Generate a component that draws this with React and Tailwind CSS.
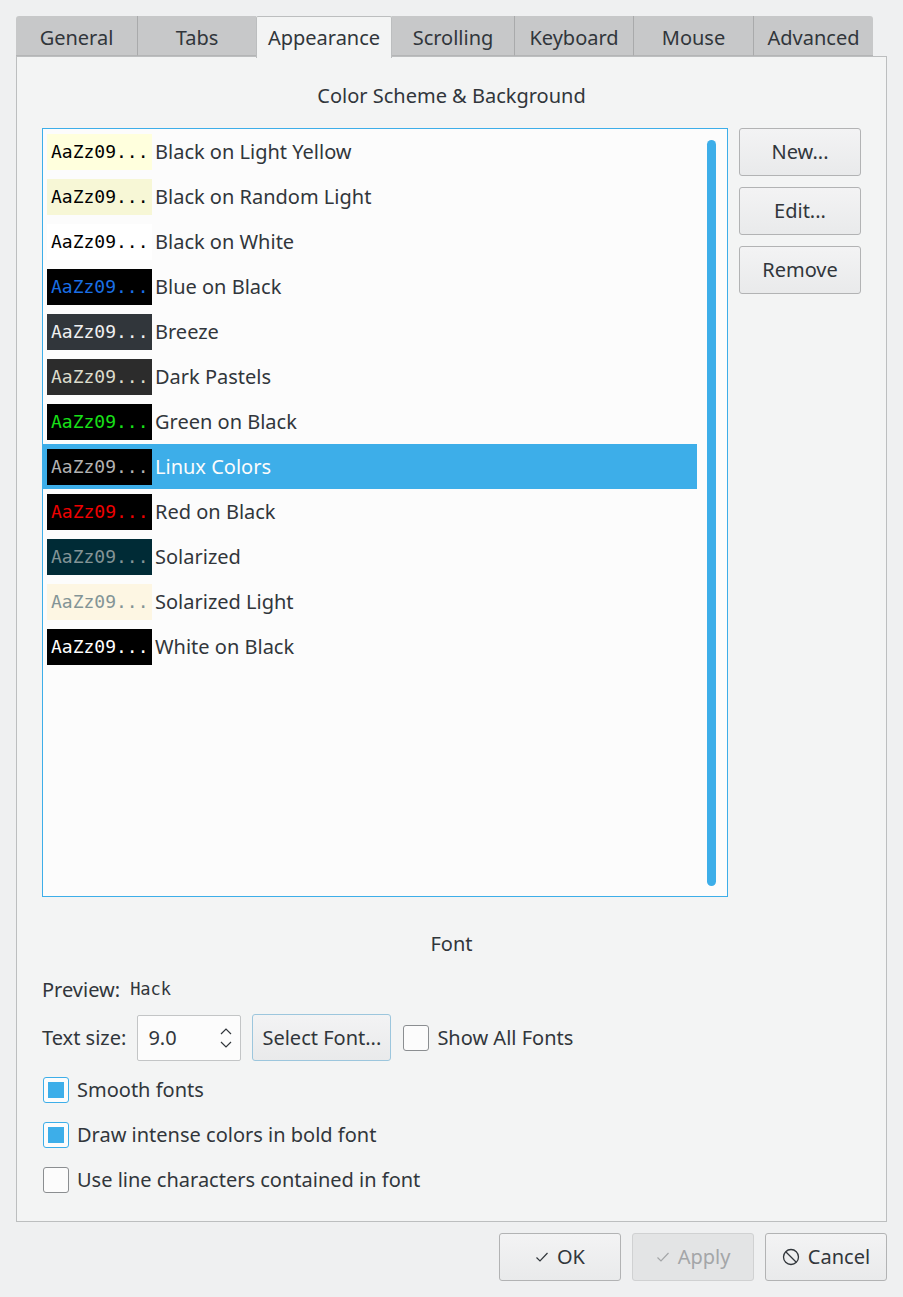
import React from 'react';

const tabs = [
  { name: 'General', w: 'w-[121px]' },
  { name: 'Tabs', w: 'w-[119px]' },
  { name: 'Appearance', w: 'w-[136px]', active: true },
  { name: 'Scrolling', w: 'w-[122px]' },
  { name: 'Keyboard', w: 'w-[119px]' },
  { name: 'Mouse', w: 'w-[120px]' },
  { name: 'Advanced', w: 'w-[120px]' },
];

const schemes = [
  { name: 'Black on Light Yellow', bg: 'bg-[#ffffdd]', fg: 'text-black' },
  { name: 'Black on Random Light', bg: 'bg-[#f7f7d6]', fg: 'text-black' },
  { name: 'Black on White', bg: 'bg-white', fg: 'text-black' },
  { name: 'Blue on Black', bg: 'bg-black', fg: 'text-[#1a6fe6]' },
  { name: 'Breeze', bg: 'bg-[#31363b]', fg: 'text-[#eff0f1]' },
  { name: 'Dark Pastels', bg: 'bg-[#2c2c2c]', fg: 'text-[#dcdccc]' },
  { name: 'Green on Black', bg: 'bg-black', fg: 'text-[#18e018]' },
  { name: 'Linux Colors', bg: 'bg-black', fg: 'text-[#b2b2b2]', selected: true },
  { name: 'Red on Black', bg: 'bg-black', fg: 'text-[#ee0000]' },
  { name: 'Solarized', bg: 'bg-[#002b36]', fg: 'text-[#839496]' },
  { name: 'Solarized Light', bg: 'bg-[#fdf6e3]', fg: 'text-[#839496]' },
  { name: 'White on Black', bg: 'bg-black', fg: 'text-white' },
];

const mono = { fontFamily: '"DejaVu Sans Mono", "Liberation Mono", monospace' };

const Button = ({ children, className = '', disabled }) => (
  <div
    className={`flex items-center justify-center gap-2 rounded-[3px] border ${
      disabled
        ? 'border-[#d0d1d2] bg-[#e3e4e5] text-[#a4a6a8]'
        : 'border-[#b2b3b4] bg-gradient-to-b from-[#f3f3f4] to-[#e9eaeb] text-[#31363b]'
    } ${className}`}
  >
    {children}
  </div>
);

const Checkbox = ({ checked, label }) => (
  <div className="flex items-center h-[45px]">
    <div
      className={`w-[26px] h-[26px] rounded-[3px] border flex items-center justify-center bg-[#fcfcfc] ${
        checked ? 'border-[#3daee9]' : 'border-[#8b8e91]'
      }`}
    >
      {checked && <div className="w-[16px] h-[16px] bg-[#3daee9]"></div>}
    </div>
    <span className="ml-[8px]">{label}</span>
  </div>
);

const CheckIcon = ({ color }) => (
  <svg width="14" height="12" viewBox="0 0 14 12">
    <path d="M1.5 6.5 L5 10 L12.5 2" fill="none" stroke={color} strokeWidth="1.2" />
  </svg>
);

export default function App() {
  return (
    <div
      className="w-[903px] h-[1297px] bg-[#eff0f1] text-[#31363b] text-[20px] px-[16px] pt-[16px]"
      style={{ fontFamily: '"Noto Sans", "Open Sans", sans-serif' }}
    >
      {/* Tab bar */}
      <div className="flex h-[40px] relative z-10">
        {tabs.map((t, i) => (
          <div
            key={t.name}
            className={`${t.w} flex items-center justify-center ${
              t.active
                ? 'bg-[#f3f4f4] border-x border-t border-[#bcbebf] h-[42px] rounded-t-[2px]'
                : `bg-[#c7c8c9] h-[40px] pt-[4px] border-b border-[#b4b5b6] ${i === 0 ? 'rounded-tl-[3px]' : ''} ${i === tabs.length - 1 ? 'rounded-tr-[3px]' : ''} ${i > 0 && !tabs[i - 1].active ? 'border-l border-l-[#a9aaab]' : ''}`
            }`}
          >
            {t.name}
          </div>
        ))}
      </div>

      {/* Page */}
      <div className="h-[1166px] border border-[#bcbebf] bg-[#f3f4f4] px-[25px] flex flex-col">
        <div className="mt-[25px] h-[28px] leading-[28px] text-center">Color Scheme &amp; Background</div>

        <div className="mt-[18px] flex items-start">
          <div className="relative w-[686px] h-[769px] border border-[#3daee9] bg-[#fcfcfc]">
            <div className="flex flex-col pr-[30px]">
              {schemes.map((s) => (
                <div
                  key={s.name}
                  className={`flex items-center h-[45px] pl-[4px] ${s.selected ? 'bg-[#3daee9] text-[#fcfcfc]' : ''}`}
                >
                  <div className={`w-[105px] h-[36px] ${s.bg} ${s.fg} flex items-center pl-[4px] text-[18px]`} style={mono}>
                    AaZz09...
                  </div>
                  <span className="ml-[3px]">{s.name}</span>
                </div>
              ))}
            </div>
            {/* scrollbar */}
            <div className="absolute left-[664px] top-[11px] w-[9px] h-[746px] rounded-full bg-[#3daee9]"></div>
          </div>

          <div className="ml-[11px] flex flex-col gap-[11px]">
            <Button className="w-[122px] h-[48px]">New...</Button>
            <Button className="w-[122px] h-[48px]">Edit...</Button>
            <Button className="w-[122px] h-[48px]">Remove</Button>
          </div>
        </div>

        <div className="mt-[33px] h-[28px] leading-[28px] text-center">Font</div>

        <div className="mt-[18px] h-[28px] flex items-center">
          <span>Preview:</span>
          <span className="ml-[10px] text-[17px]" style={mono}>Hack</span>
        </div>

        <div className="mt-[10px] flex items-center h-[47px]">
          <span>Text size:</span>
          <div className="ml-[11px] w-[104px] h-[46px] bg-[#fcfcfc] border border-[#c3c5c6] rounded-[2px] flex items-center pl-[10px] relative">
            9.0
            <svg className="absolute right-[7px] top-[11px]" width="14" height="22" viewBox="0 0 14 22">
              <path d="M2 7 L7 2 L12 7" fill="none" stroke="#31363b" strokeWidth="1.2" />
              <path d="M2 15 L7 20 L12 15" fill="none" stroke="#31363b" strokeWidth="1.2" />
            </svg>
          </div>
          <div className="ml-[11px] w-[139px] h-[47px] rounded-[3px] border border-[#9cc6dd] bg-gradient-to-b from-[#f3f3f4] to-[#e9eaeb] flex items-center justify-center">
            Select Font...
          </div>
          <div className="ml-[12px] w-[26px] h-[26px] rounded-[3px] border border-[#8b8e91] bg-[#fcfcfc]"></div>
          <span className="ml-[8px]">Show All Fonts</span>
        </div>

        <div className="mt-[6px] flex flex-col pl-[1px]">
          <Checkbox checked label="Smooth fonts" />
          <Checkbox checked label="Draw intense colors in bold font" />
          <Checkbox label="Use line characters contained in font" />
        </div>
      </div>

      {/* Dialog buttons */}
      <div className="mt-[11px] flex justify-end gap-[11px]">
        <Button className="w-[122px] h-[48px]">
          <CheckIcon color="#31363b" />
          <span>OK</span>
        </Button>
        <Button disabled className="w-[122px] h-[48px]">
          <CheckIcon color="#a4a6a8" />
          <span>Apply</span>
        </Button>
        <Button className="w-[122px] h-[48px]">
          <svg width="18" height="18" viewBox="0 0 18 18">
            <circle cx="9" cy="9" r="7.5" fill="none" stroke="#31363b" strokeWidth="1.3" />
            <path d="M4 4 L14 14" stroke="#31363b" strokeWidth="1.3" />
          </svg>
          <span>Cancel</span>
        </Button>
      </div>
    </div>
  );
}
